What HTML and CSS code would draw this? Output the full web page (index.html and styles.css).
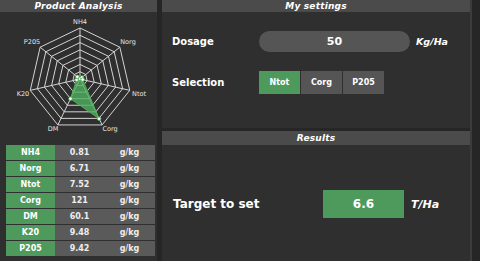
FILE: index.html
```html
<!DOCTYPE html>
<html>
<head>
    <title>Dosage</title>
    <link rel="stylesheet" href="styles.css">
</head>
<body>
    <div class="page">
        <section class="panel analysis">
            <div class="panel-title">Product Analysis</div>
            <svg id="radar" class="radar" width="157" height="133"></svg>
            <div class="table">
                <div class="row"><span class="name">NH4</span><span class="value">0.81</span><span class="unit">g/kg</span></div>
                <div class="row"><span class="name">Norg</span><span class="value">6.71</span><span class="unit">g/kg</span></div>
                <div class="row"><span class="name">Ntot</span><span class="value">7.52</span><span class="unit">g/kg</span></div>
                <div class="row"><span class="name">Corg</span><span class="value">121</span><span class="unit">g/kg</span></div>
                <div class="row"><span class="name">DM</span><span class="value">60.1</span><span class="unit">g/kg</span></div>
                <div class="row"><span class="name">K20</span><span class="value">9.48</span><span class="unit">g/kg</span></div>
                <div class="row"><span class="name">P205</span><span class="value">9.42</span><span class="unit">g/kg</span></div>
            </div>
        </section>

        <div class="side">
            <section class="panel settings">
                <div class="panel-title">My settings</div>
                <div class="setting-row dosage-row">
                    <span class="label">Dosage</span>
                    <div class="pill">50</div>
                    <span class="unit-text">Kg/Ha</span>
                </div>
                <div class="setting-row selection-row">
                    <span class="label">Selection</span>
                    <div class="choices">
                        <button class="choice active">Ntot</button>
                        <button class="choice">Corg</button>
                        <button class="choice">P205</button>
                    </div>
                </div>
            </section>

            <section class="panel results">
                <div class="panel-title">Results</div>
                <div class="result-row">
                    <span class="target-label">Target to set</span>
                    <div class="target-box">6.6</div>
                    <span class="target-unit">T/Ha</span>
                </div>
            </section>
        </div>
    </div>

    <script>
        const labels = ["NH4", "Norg", "Ntot", "Corg", "DM", "K20", "P205"];
        const values = [0.81, 6.71, 7.52, 121, 60.1, 9.48, 9.42];
        const labelPos = [[80, 10], [128, 30], [139, 82], [110, 117], [53, 117], [23, 82], [32, 30]];
        const cx = 80, cy = 67, radius = 51, maxValue = 140, rings = 7;
        const svg = document.getElementById("radar");
        const ns = "http://www.w3.org/2000/svg";

        function point(i, r) {
            const angle = (-90 + i * 360 / labels.length) * Math.PI / 180;
            return [cx + r * Math.cos(angle), cy + r * Math.sin(angle)];
        }

        function add(tag, attrs) {
            const el = document.createElementNS(ns, tag);
            for (const key in attrs) el.setAttribute(key, attrs[key]);
            svg.appendChild(el);
            return el;
        }

        // grid rings
        for (let k = 1; k <= rings; k++) {
            const pts = labels.map((_, i) => point(i, radius * k / rings).join(",")).join(" ");
            add("polygon", { points: pts, class: "grid" });
        }

        // spokes and labels
        labels.forEach((name, i) => {
            const [x, y] = point(i, radius);
            add("line", { x1: cx, y1: cy, x2: x, y2: y, class: "grid" });
            const text = add("text", { x: labelPos[i][0], y: labelPos[i][1], class: "axis-label" });
            text.textContent = name;
        });

        // data
        const dataPts = values.map((v, i) => point(i, radius * v / maxValue));
        add("polygon", { points: dataPts.map(p => p.join(",")).join(" "), class: "data" });
        dataPts.forEach(p => add("circle", { cx: p[0], cy: p[1], r: 1.8, class: "dot" }));
    </script>
</body>
</html>
```

FILE: styles.css
```css
body {
    margin: 0;
    padding: 0;
    background: #262626;
    font-family: "DejaVu Sans", Verdana, sans-serif;
    color: #fff;
}

.page {
    display: grid;
    grid-template-columns: 157px 310px;
    column-gap: 5px;
    width: 480px;
    height: 261px;
    overflow: hidden;
}

.panel {
    background: #2f2f2f;
}

.panel-title {
    height: 12px;
    line-height: 12px;
    background: #4b4b4b;
    text-align: center;
    font-size: 9px;
    font-weight: bold;
    font-style: italic;
    letter-spacing: 0.2px;
}

.analysis {
    height: 261px;
}

.radar {
    display: block;
}

.radar .grid {
    fill: none;
    stroke: #d4d4d4;
    stroke-width: 1;
}

.radar .axis-label {
    fill: #e6e6e6;
    font-size: 6.5px;
    text-anchor: middle;
    dominant-baseline: central;
}

.radar .data {
    fill: rgba(80, 175, 95, 0.8);
    stroke: #4caf50;
    stroke-width: 1;
}

.radar .dot {
    fill: #fff;
    stroke: #4caf50;
    stroke-width: 0.8;
}

.table {
    display: flex;
    flex-direction: column;
    gap: 1px;
    margin-left: 6px;
    width: 149px;
}

.row {
    display: grid;
    grid-template-columns: 49px 49px 51px;
    height: 15px;
    line-height: 15px;
    font-size: 8px;
    font-weight: bold;
    text-align: center;
    background: #5a5a5a;
}

.row .name {
    background: #4e9a5d;
}

.row .value,
.row .unit {
    color: #eee;
}

.side {
    display: flex;
    flex-direction: column;
    gap: 3px;
    border-right: 2px solid #3c3c3c;
}

.settings {
    height: 128px;
}

.panel-title + .setting-row {
    margin-top: 19px;
}

.setting-row {
    display: flex;
    align-items: center;
    padding-left: 10px;
}

.selection-row {
    margin-top: 19px;
}

.label {
    width: 87px;
    font-size: 10px;
    font-weight: bold;
}

.pill {
    width: 151px;
    height: 21px;
    line-height: 21px;
    border-radius: 11px;
    background: #555;
    text-align: center;
    font-size: 11px;
    font-weight: bold;
}

.unit-text {
    margin-left: 6px;
    font-size: 9.5px;
    font-weight: bold;
    font-style: italic;
}

.choices {
    display: flex;
    gap: 1px;
}

.choice {
    width: 41px;
    height: 23px;
    border: none;
    padding: 0;
    background: #555;
    color: #fff;
    font-family: "DejaVu Sans", Verdana, sans-serif;
    font-size: 8px;
    font-weight: bold;
}

.choice.active {
    background: #4e9a5d;
}

.results {
    height: 130px;
}

.results .panel-title {
    height: 14px;
    line-height: 14px;
}

.result-row {
    display: flex;
    align-items: center;
    margin-top: 45px;
    padding-left: 11px;
}

.target-label {
    width: 150px;
    font-size: 12px;
    font-weight: bold;
}

.target-box {
    width: 81px;
    height: 28px;
    line-height: 28px;
    background: #4e9a5d;
    text-align: center;
    font-size: 12px;
    font-weight: bold;
}

.target-unit {
    margin-left: 7px;
    font-size: 11px;
    font-weight: bold;
    font-style: italic;
}
```
